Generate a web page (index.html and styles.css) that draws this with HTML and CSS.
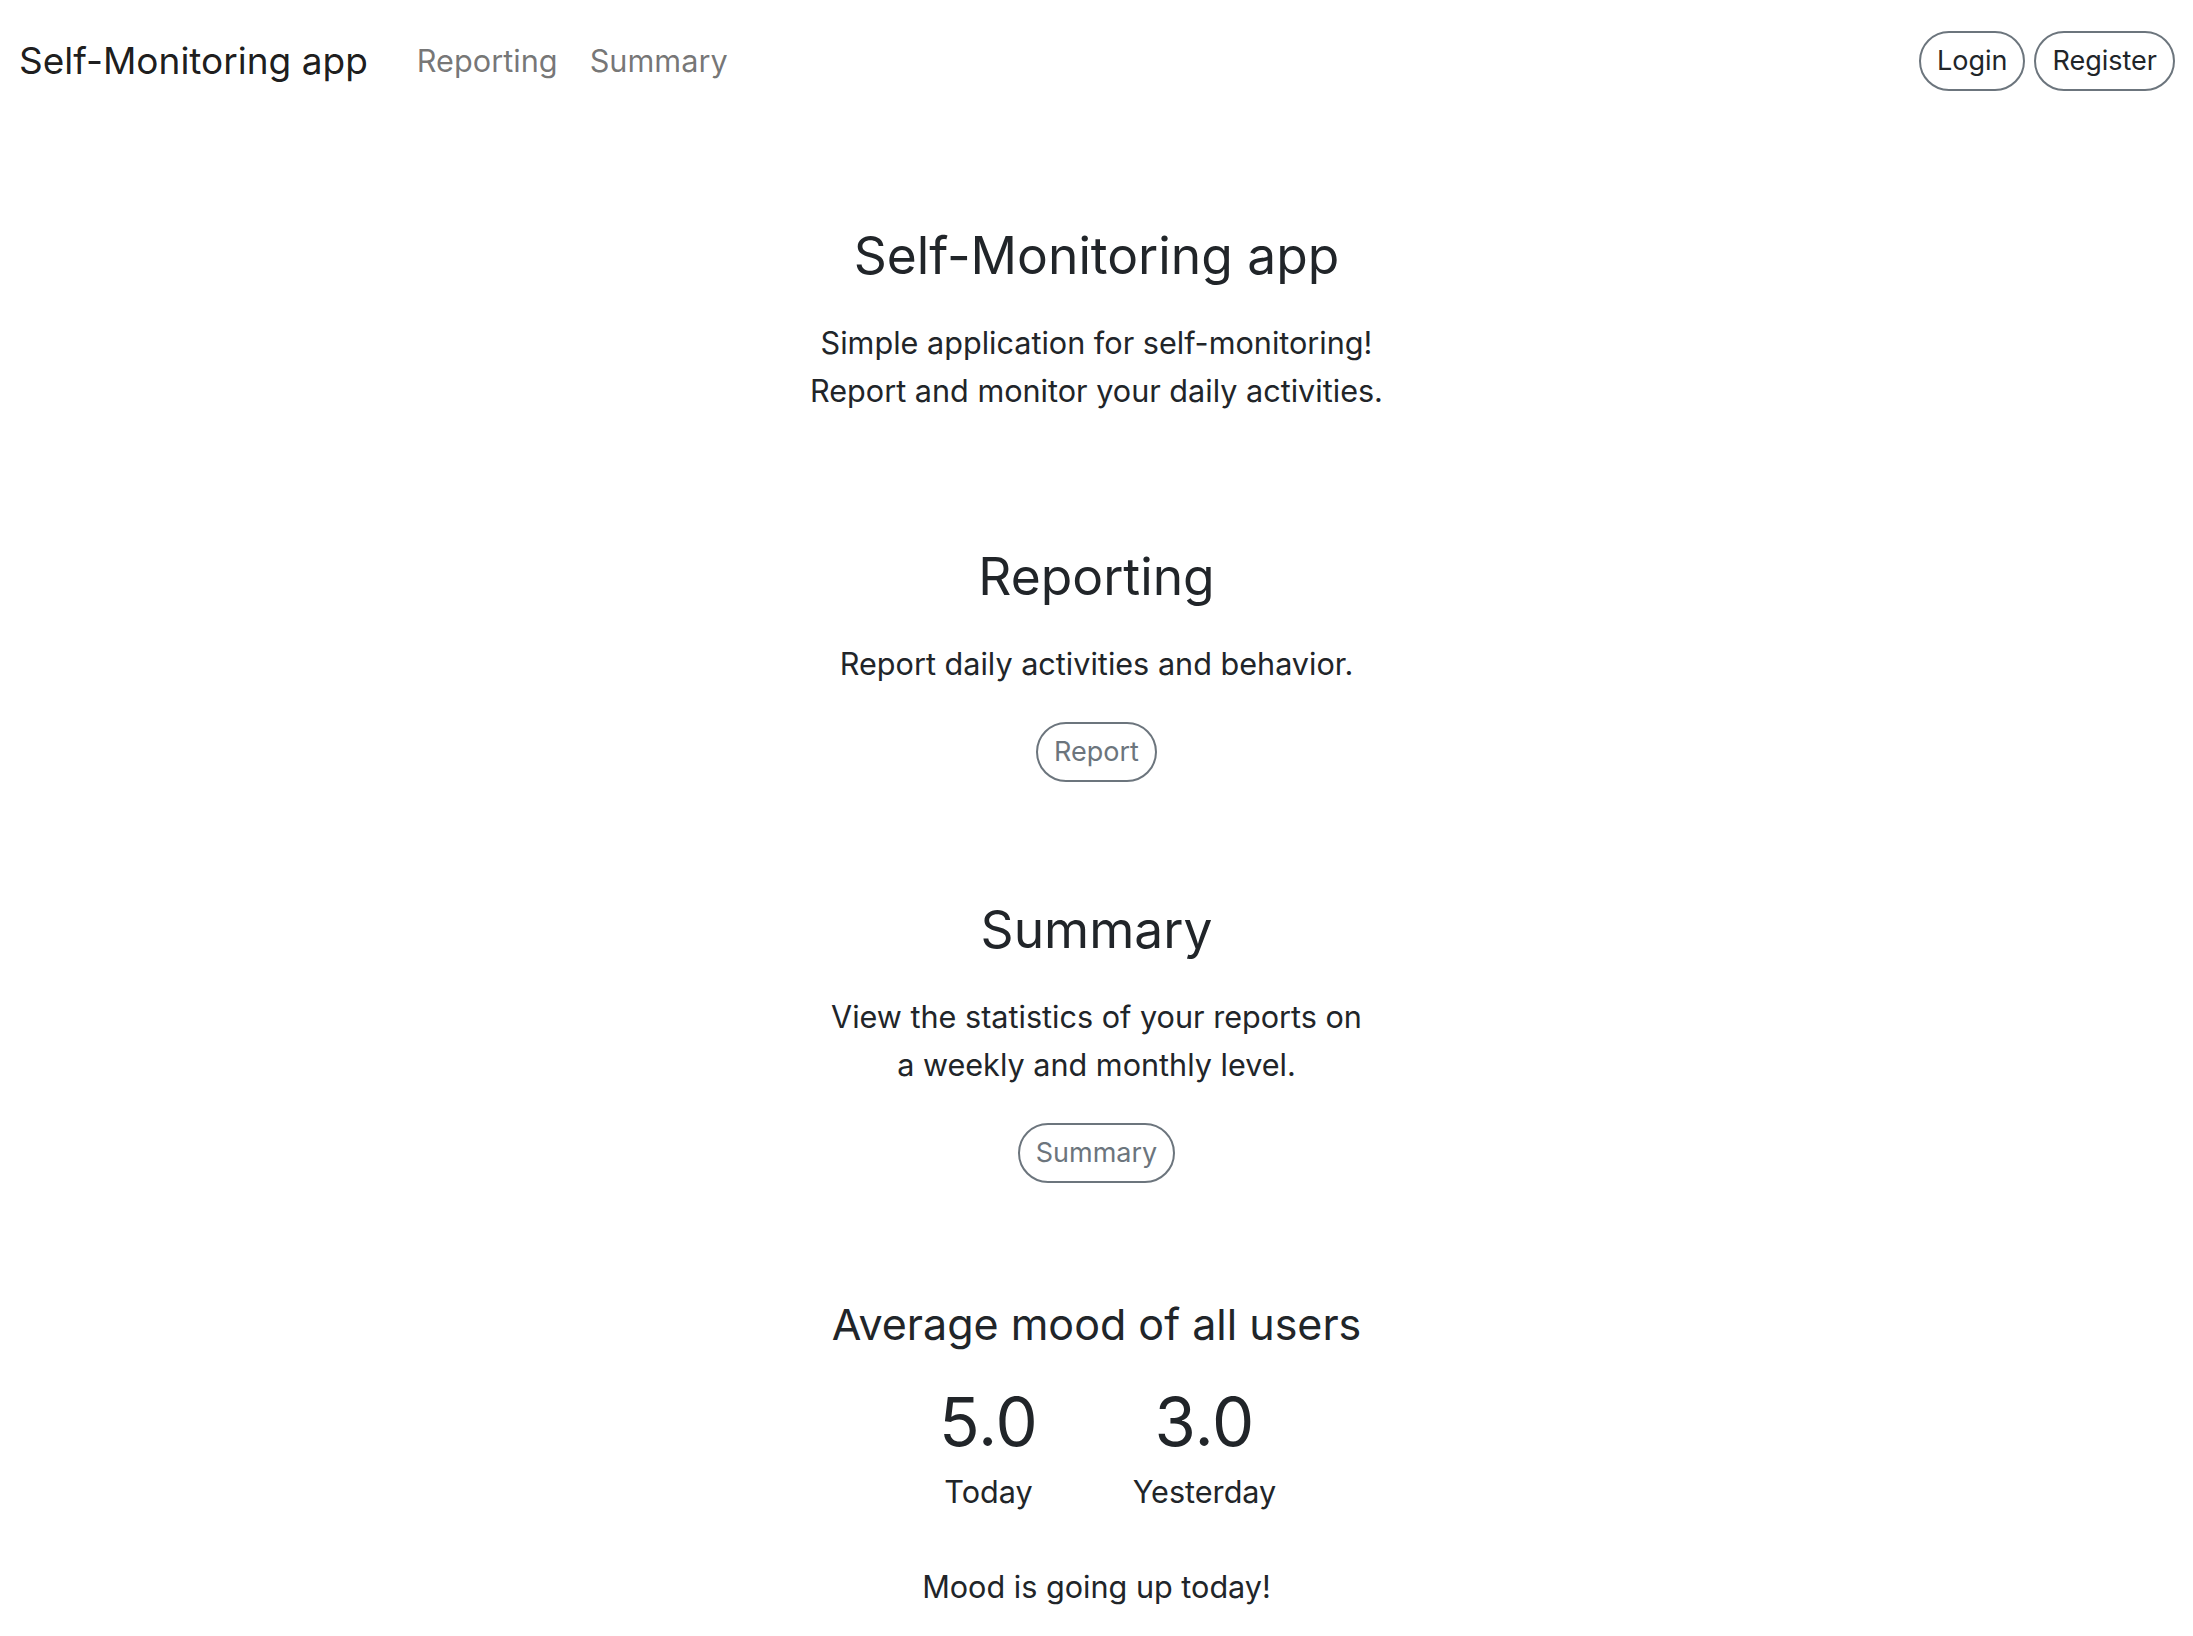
FILE: index.html
```html
<!DOCTYPE html>
<html lang="en">
<head>
<meta charset="utf-8">
<title>Self-Monitoring app</title>
<link rel="stylesheet" href="styles.css">
</head>
<body>
<nav class="navbar">
  <div class="nav-left">
    <a class="brand" href="#">Self-Monitoring app</a>
    <a class="nav-link" href="#">Reporting</a>
    <a class="nav-link" href="#">Summary</a>
  </div>
  <div class="nav-right">
    <a class="btn btn-dark-text" href="#">Login</a>
    <a class="btn btn-dark-text" href="#">Register</a>
  </div>
</nav>
<main class="main">
  <section class="hero">
    <h1 class="title">Self-Monitoring app</h1>
    <p class="text">Simple application for self-monitoring!<br>Report and monitor your daily activities.</p>
  </section>
  <section class="block">
    <h2 class="title">Reporting</h2>
    <p class="text">Report daily activities and behavior.</p>
    <a class="btn btn-grey" href="#">Report</a>
  </section>
  <section class="block">
    <h2 class="title">Summary</h2>
    <p class="text">View the statistics of your reports on<br>a weekly and monthly level.</p>
    <a class="btn btn-grey" href="#">Summary</a>
  </section>
  <section class="mood">
    <h4 class="mood-title">Average mood of all users</h4>
    <div class="stats">
      <div class="stat">
        <div class="stat-value">5.0</div>
        <div class="stat-label">Today</div>
      </div>
      <div class="stat">
        <div class="stat-value">3.0</div>
        <div class="stat-label">Yesterday</div>
      </div>
    </div>
    <p class="trend">Mood is going up today!</p>
  </section>
</main>
</body>
</html>
```

FILE: styles.css
```css
* { box-sizing: border-box; }
html, body { margin: 0; padding: 0; background: #fff; }
body {
  font-family: Inter, "Noto Sans", "Liberation Sans", sans-serif;
  font-size: 30.6px;
  line-height: 48px;
  color: #212529;
}
a { text-decoration: none; }

.navbar {
  height: 122px;
  display: flex;
  align-items: center;
  justify-content: space-between;
  padding: 0 18px 0 19px;
}
.nav-left { display: flex; align-items: center; }
.brand {
  font-size: 37px;
  line-height: 60px;
  color: rgba(0, 0, 0, 0.9);
  margin-right: 33px;
}
.nav-link {
  font-size: 30.7px;
  line-height: 48px;
  color: rgba(0, 0, 0, 0.55);
  padding: 0 16px;
}
.nav-right { display: flex; gap: 9px; }

.btn {
  display: inline-block;
  font-size: 27px;
  line-height: 42px;
  padding: 7px 16px;
  border: 2px solid #6c757d;
  border-radius: 999px;
}
.btn-dark-text { color: #212529; }
.btn-grey { color: #6c757d; }

.main {
  display: flex;
  flex-direction: column;
  align-items: center;
  text-align: center;
}
.hero { margin-top: 100px; display: flex; flex-direction: column; align-items: center; }
.title {
  margin: 0;
  font-weight: 400;
  font-size: 51.5px;
  line-height: 66px;
}
.text { margin: 31px 0 0; }
.block { margin-top: 128px; display: flex; flex-direction: column; align-items: center; }
.block + .block { margin-top: 114px; }
.block .btn { margin-top: 34px; }

.mood { margin-top: 113px; display: flex; flex-direction: column; align-items: center; }
.mood-title {
  margin: 0;
  font-weight: 400;
  font-size: 43px;
  line-height: 57px;
}
.stats { display: flex; margin-top: 26px; }
.stat { width: 216px; display: flex; flex-direction: column; align-items: center; }
.stat-value { font-size: 67px; line-height: 86px; }
.stat-label { margin-top: 3px; }
.trend { margin: 47px 0 0; }
```
